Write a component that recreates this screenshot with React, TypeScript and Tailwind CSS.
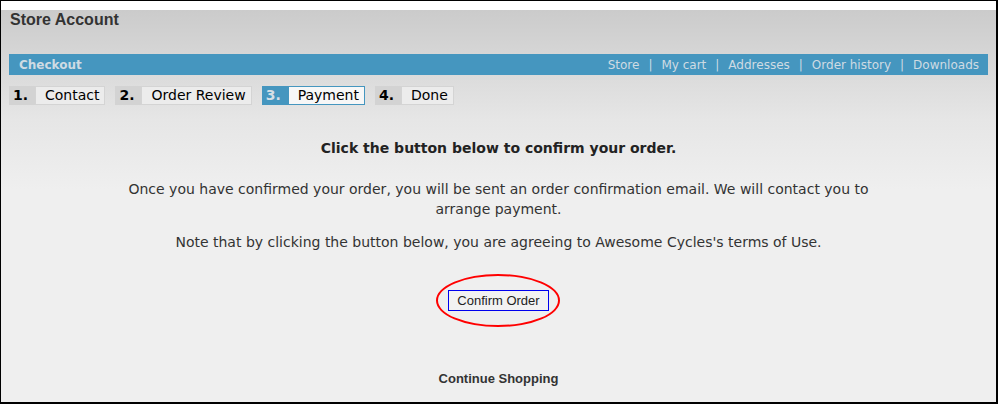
import React from "react";

const links = ["Store", "My cart", "Addresses", "Order history", "Downloads"];

const steps = [
    { n: "1.", label: "Contact", active: false },
    { n: "2.", label: "Order Review", active: false },
    { n: "3.", label: "Payment", active: true },
    { n: "4.", label: "Done", active: false },
];

function Step({ n, label, active }: { n: string; label: string; active: boolean }) {
    return (
        <div className="flex h-[19px] items-stretch text-[14px] leading-[19px]">
            <span
                className={`w-[26px] pl-[4px] font-bold ${
                    active ? "bg-[#4596bf] text-[#d5dfe6]" : "bg-[#d3d3d3] text-black"
                }`}
            >
                {n}
            </span>
            <span
                className={`border pl-[9px] pr-[5px] leading-[17px] text-black ${
                    active ? "border-[#4596bf] bg-[#f7f7f7]" : "border-[#d4d4d4] bg-[#ececec]"
                }`}
            >
                {label}
            </span>
        </div>
    );
}

export default function App() {
    return (
        <div className="h-[404px] w-[998px] border-t border-l border-r-2 border-b-2 border-black bg-white font-['DejaVu_Sans',Verdana,sans-serif]">
            <div className="mt-[9px] h-[392px] w-full bg-[linear-gradient(#cbcbcb,#e6e6e6_110px,#efefef_180px)] px-[8px]">
                <h1 className="pt-[1px] pl-[1px] font-['Liberation_Sans',Arial,sans-serif] text-[16px] leading-[18px] font-bold text-[#333]">
                    Store Account
                </h1>

                <div className="mt-[25px] flex h-[21px] items-center justify-between bg-[#4596bf] pr-[9px] pl-[10px] text-[12px] text-[#cfdbe3]">
                    <span className="font-bold">Checkout</span>
                    <div className="flex items-center">
                        {links.map((l, i) => (
                            <span key={l} className="flex items-center">
                                {i > 0 && <span className="px-[9px]">|</span>}
                                <span>{l}</span>
                            </span>
                        ))}
                    </div>
                </div>

                <div className="mt-[11px] flex gap-[10px]">
                    {steps.map((s) => (
                        <Step key={s.n} {...s} />
                    ))}
                </div>

                <div className="text-center text-[14px] text-[#333]">
                    <p className="mt-[34px] leading-[18px] font-bold text-[#222]">
                        Click the button below to confirm your order.
                    </p>
                    <p className="mx-auto mt-[22px] w-[780px] leading-[20px]">
                        Once you have confirmed your order, you will be sent an order confirmation email. We will contact you to arrange payment.
                    </p>
                    <p className="mt-[13px] leading-[20px]">
                        Note that by clicking the button below, you are agreeing to Awesome Cycles's terms of Use.
                    </p>

                    <div className="mt-[38px] flex justify-center">
                        <div className="relative">
                            <button className="h-[21px] border border-[#0000ee] bg-[#f2f2f2] px-[8px] font-['Liberation_Sans',Arial,sans-serif] text-[13px] leading-[19px] text-[#222]">
                                Confirm Order
                            </button>
                            <span className="pointer-events-none absolute top-[-16px] left-[-12px] h-[53px] w-[124px] rounded-[50%] border-2 border-[#ff0000]" />
                        </div>
                    </div>

                    <p className="mt-[61px] font-['Liberation_Sans',Arial,sans-serif] text-[13px] leading-[14px] font-bold text-[#333]">
                        Continue Shopping
                    </p>
                </div>
            </div>
        </div>
    );
}
